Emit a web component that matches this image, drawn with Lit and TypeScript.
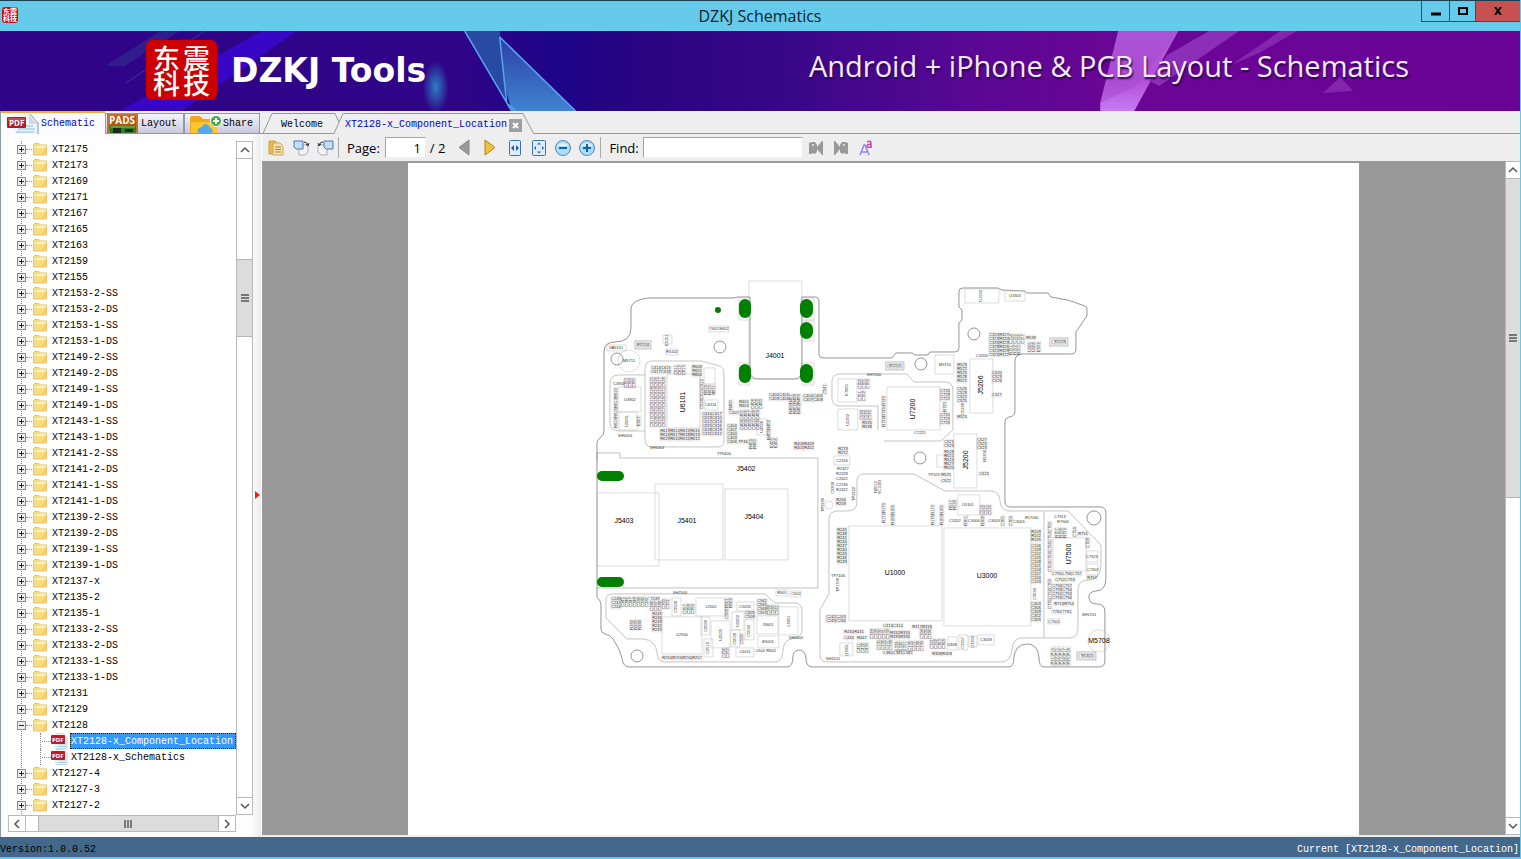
import { LitElement, html, svg, css } from "lit";
import { customElement, state } from "lit/decorators.js";

const FOLDERS = [
  "XT2175", "XT2173", "XT2169", "XT2171", "XT2167", "XT2165", "XT2163", "XT2159", "XT2155",
  "XT2153-2-SS", "XT2153-2-DS", "XT2153-1-SS", "XT2153-1-DS",
  "XT2149-2-SS", "XT2149-2-DS", "XT2149-1-SS", "XT2149-1-DS",
  "XT2143-1-SS", "XT2143-1-DS",
  "XT2141-2-SS", "XT2141-2-DS", "XT2141-1-SS", "XT2141-1-DS",
  "XT2139-2-SS", "XT2139-2-DS", "XT2139-1-SS", "XT2139-1-DS",
  "XT2137-x", "XT2135-2", "XT2135-1",
  "XT2133-2-SS", "XT2133-2-DS", "XT2133-1-SS", "XT2133-1-DS",
  "XT2131", "XT2129", "XT2128", "XT2127-4", "XT2127-3", "XT2127-2", "XT2127-1",
];
const OPEN_FOLDER = "XT2128";
const FILES = ["XT2128-x_Component_Location", "XT2128-x_Schematics"];

/* ---------- board drawing ---------- */

const OUTLINE =
  "M597 443Q597 440 601 437Q604 435 604 431V352Q604 342 615 342Q631 342 631 328V308Q632 300 648 298H733L738 297H750" +
  "V372Q751 379 758 379H794Q801 379 802 372V297H815Q819 297 819 302V354Q819 358 823 358H892L896 353H912L915 355H928L930 352H955" +
  "Q959 352 959 348V323L962 320V310L959 307V292Q959 288 963 288H998L1002 290L1025 291L1027 293H1048L1051 297Q1069 299 1085 306" +
  "Q1087 307 1087 309V316L1076 332V349Q1076 354 1071 354H1022Q1015 354 1015 362V412Q1014 417 1009 417Q1005 418 1005 422V502" +
  "Q1006 507 1010 507H1100Q1106 507 1106 513V578Q1106 591 1096 591Q1089 592 1089 597Q1089 604 1097 604Q1105 604 1105 612" +
  "V661Q1105 667 1099 667H1044Q1039 667 1039 657Q1038 644 1027 644Q1015 645 1014 657Q1014 667 1009 667H812Q806 667 806 658" +
  "Q805 650 799 650Q793 651 793 657Q793 667 787 667H629Q623 667 622 658Q620 649 613 639Q610 635 605 634Q601 633 601 629V605" +
  "Q601 601 597 597Z";

const SHIELDS = [
  "M645 431H619Q610 431 610 422V384Q610 375 619 375H645",
  "M653 361H701L720 366Q724 368 724 373V441Q724 447 718 447H652Q645 447 645 440V368Q645 361 653 361Z",
  "M878 430V406H840Q832 406 832 398V382Q832 374 840 374H907L914 382H945Q953 382 953 390V430L941 441H884",
  "M597 461V453H620V458H818V588H597",
  "M820 610L829 594V520Q829 511 838 511H848Q857 511 857 502V481Q857 474 864 474H914L945 491H990Q999 491 1000 500Q1000 511 1010 511H1068L1101 545V565Q1101 579 1089 580Q1078 580 1078 590V630Q1077 638 1069 638H1022Q1013 638 1012 650Q1011 662 1001 662H827Q820 662 820 655Z",
  "M606 600Q606 594 613 594H765L775 603H795Q802 604 802 610V631Q801 638 792 639Q783 640 783 652Q782 662 775 662H664Q658 662 657 653Q656 640 643 639H627L606 618Z",
  "M1044 512V638",
];

const CHIPS: number[][] = [
  [749, 281, 53, 98], [667, 374, 33, 54], [618, 387, 23, 25], [619, 412, 18, 18],
  [597, 493, 62, 73], [655, 484, 68, 76], [725, 489, 63, 71], [849, 526, 93, 95], [944, 528, 87, 98],
  [887, 387, 53, 43], [970, 359, 23, 54], [954, 434, 23, 54], [838, 379, 19, 23], [838, 409, 20, 21],
  [935, 355, 19, 19], [965, 289, 34, 14], [1005, 291, 20, 10], [1053, 538, 33, 33], [958, 495, 22, 20],
  [662, 617, 40, 37], [696, 598, 29, 18], [711, 621, 19, 27], [757, 616, 21, 18], [779, 607, 19, 28],
  [672, 598, 9, 18], [732, 612, 12, 18], [737, 602, 17, 9], [758, 636, 21, 12], [736, 648, 18, 9],
  [731, 630, 9, 17], [745, 620, 9, 20], [701, 617, 9, 18], [704, 639, 9, 18],
  [840, 643, 13, 13], [948, 637, 9, 13], [959, 635, 9, 15], [969, 636, 8, 11], [978, 635, 16, 10],
  [1048, 619, 12, 5], [607, 345, 19, 6], [663, 335, 9, 9], [666, 349, 12, 6], [709, 326, 20, 6],
  [739, 298, 11, 22], [802, 298, 12, 22], [802, 321, 12, 20], [739, 363, 11, 22], [802, 363, 12, 22],
  [834, 456, 16, 9], [776, 590, 12, 6], [790, 591, 11, 6], [757, 419, 10, 16], [704, 368, 11, 16],
  [1087, 551, 11, 11], [1087, 564, 11, 11], [937, 455, 9, 12], [705, 400, 13, 10],
];

/* framed parts with an inner outline */
const FRAMED: number[][] = [[635, 341, 16, 8], [886, 362, 18, 8], [1050, 338, 18, 8], [1077, 652, 19, 8]];

const HOLES: number[][] = [
  [720, 347, 6], [617, 359, 6], [974, 334, 6], [921, 364, 6], [920, 458, 6], [1094, 518, 7], [637, 656, 6],
];

const PADS: number[][] = [
  [739, 299, 12, 19], [800, 299, 13, 19], [800, 322, 13, 17], [739, 364, 12, 19], [800, 364, 13, 19],
  [597, 471, 27, 10], [597, 577, 27, 10], [715, 307, 6, 6],
];

/* centre x, centre y, name, turned */
const NAMES: [number, number, string, boolean?][] = [
  [775, 356, "J4001"], [746, 469, "J5402"], [624, 521, "J5403"], [687, 521, "J5401"], [754, 517, "J5404"],
  [895, 573, "U1000"], [987, 576, "U3000"], [1099, 641, "M5708"],
  [683, 402, "U6101", true], [913, 409, "U7200", true], [981, 385, "J5206", true],
  [966, 460, "J5200", true], [1069, 554, "U7500", true],
];

/* centre x, centre y, name, turned */
const SMALL: [number, number, string, boolean?][] = [
  [629, 361, "M5711"], [616, 348, "VA5101"], [643, 345, "E5104"], [667, 340, "E5101", true], [672, 352, "R5102"],
  [714, 329, "T402"], [724, 329, "R402"], [630, 400, "U3902"], [627, 421, "U5001", true],
  [619, 384, "C3901"], [625, 436, "SH5004"], [657, 448, "SH5003"], [724, 454, "TP5400"],
  [711, 405, "C6111"], [762, 427, "U4006", true], [847, 390, "K7000", true], [848, 420, "U5302", true],
  [945, 365, "M5710"], [981, 296, "U1502", true], [1015, 296, "U1503"], [895, 366, "E5204"], [1060, 342, "E5205"],
  [1087, 656, "E5303"], [968, 505, "U5101"], [955, 521, "C3202"], [974, 521, "C3006"], [994, 521, "C3003"],
  [1019, 522, "C3005"], [1032, 518, "R1706L"], [874, 375, "SH7000"], [920, 433, "C7221"], [842, 461, "C2126"],
  [842, 485, "C2136"], [843, 469, "R2327"], [842, 474, "R2228"], [842, 479, "C2022"], [842, 490, "R2422"],
  [833, 488, "C2208", true], [854, 494, "TP2322", true], [823, 505, "TP2326", true], [838, 576, "TP7106"],
  [838, 585, "TP1706", true], [876, 487, "R6012", true], [880, 487, "VC1003", true],
  [682, 635, "U2500"], [711, 607, "L2502"], [721, 635, "U2505", true], [768, 625, "J5601"], [789, 621, "L5601", true],
  [676, 607, "C2508", true], [738, 621, "U5602", true], [745, 607, "C5026"], [768, 642, "E5001"], [745, 652, "C5011"],
  [735, 639, "C5028", true], [749, 631, "C5024", true], [706, 626, "C2506", true], [708, 648, "C2510", true],
  [680, 593, "SH2500"], [782, 593, "R501"], [796, 594, "C502"], [796, 638, "SH5600"],
  [760, 651, "C504"], [771, 651, "R504"], [833, 659, "SH3101"], [847, 650, "Q3001", true], [952, 645, "U308"],
  [963, 643, "C3307", true], [973, 642, "C3302", true], [986, 640, "C3018"], [1035, 594, "C3024", true],
  [1060, 517, "C7513"], [1063, 522, "R7506"], [1092, 557, "C7523"], [1093, 570, "C7502"], [1054, 622, "C7501"],
  [1089, 615, "SH5701"], [985, 456, "R5206", true], [934, 475, "TP525"],
  [963, 409, "C5226", true], [982, 356, "C3206"],
];

/* grids of passives: x, y, columns, rows, turned, name prefix */
const GRIDS: [number, number, number, number, number, string][] = [
  [989, 333, 1, 6, 0, "C32"], [999, 333, 1, 6, 0, "R32"], [1009, 334, 4, 1, 1, "C15"], [1009, 345, 3, 1, 1, "R15"],
  [1026, 336, 1, 1, 0, "R53"], [1028, 342, 2, 1, 1, "U50"], [1037, 342, 1, 1, 1, "E50"],
  [957, 363, 1, 5, 0, "R52"], [957, 387, 1, 4, 0, "C52"], [957, 415, 1, 1, 0, "R52"], [992, 371, 1, 3, 0, "C52"],
  [992, 393, 1, 1, 0, "L52"], [858, 379, 3, 1, 1, "C70"], [858, 391, 2, 1, 1, "C70"], [860, 410, 3, 1, 1, "C53"],
  [862, 421, 1, 2, 0, "R53"], [882, 396, 1, 1, 1, "R72"], [882, 407, 1, 2, 1, "R72"], [940, 389, 1, 3, 0, "C72"],
  [943, 402, 1, 1, 1, "R72"], [940, 413, 1, 3, 0, "C72"], [977, 438, 1, 3, 0, "C52"], [979, 472, 1, 1, 0, "C52"],
  [944, 440, 1, 2, 0, "C52"], [944, 450, 1, 5, 0, "R52"], [941, 473, 1, 1, 0, "R52"], [941, 479, 1, 1, 0, "C52"],
  [838, 447, 1, 2, 0, "R21"], [836, 498, 1, 2, 0, "R20"],
  [624, 378, 3, 1, 1, "C39"], [614, 388, 1, 4, 1, "R61"], [637, 416, 1, 1, 1, "E50"],
  [651, 366, 2, 2, 0, "C61"], [674, 365, 3, 1, 1, "C61"], [692, 365, 1, 3, 0, "R60"], [650, 377, 4, 5, 1, "C61"],
  [700, 379, 1, 3, 1, "C61"], [704, 385, 3, 1, 1, "R61"], [702, 412, 2, 6, 0, "C61"], [660, 429, 4, 3, 0, "R61"],
  [729, 400, 1, 1, 1, "R40"], [729, 411, 1, 1, 0, "C40"], [727, 424, 1, 5, 0, "C40"],
  [739, 400, 1, 2, 0, "R40"], [751, 399, 3, 1, 1, "C40"], [740, 410, 5, 2, 1, "C40"], [767, 420, 1, 2, 1, "R40"],
  [749, 439, 2, 1, 1, "R40"], [738, 440, 1, 1, 0, "TP4"], [770, 438, 2, 1, 1, "E40"],
  [769, 393, 2, 2, 0, "C40"], [789, 394, 3, 2, 1, "R40"], [803, 394, 2, 2, 0, "C40"], [823, 384, 1, 1, 1, "C54"],
  [794, 442, 2, 2, 0, "R40"],
  [837, 528, 1, 9, 0, "R24"], [826, 615, 2, 2, 0, "C24"], [882, 503, 1, 2, 1, "R17"], [891, 505, 1, 2, 1, "R10"],
  [931, 505, 1, 2, 1, "R17"], [940, 505, 1, 2, 1, "R10"], [949, 500, 2, 1, 1, "R51"], [980, 505, 3, 1, 1, "C51"],
  [964, 516, 1, 1, 1, "R30"], [981, 516, 1, 1, 1, "R30"], [1001, 516, 1, 1, 1, "C30"], [1009, 516, 1, 1, 1, "C30"],
  [1031, 530, 1, 3, 0, "R10"], [1031, 544, 1, 10, 0, "C10"], [1031, 602, 1, 5, 0, "C30"],
  [1048, 522, 1, 5, 1, "C75"], [1055, 528, 3, 1, 1, "R75"], [1073, 527, 1, 1, 1, "C75"], [1078, 532, 1, 1, 0, "R75"],
  [1086, 538, 1, 1, 1, "C75"], [1052, 572, 3, 1, 0, "L75"], [1055, 578, 2, 1, 0, "C75"], [1048, 579, 1, 3, 1, "C75"],
  [1052, 584, 2, 4, 0, "C75"], [1054, 602, 2, 1, 0, "R75"], [1052, 610, 2, 1, 0, "T76"], [1087, 576, 1, 1, 0, "R75"],
  [1051, 647, 5, 1, 1, "P1"], [1051, 656, 5, 1, 1, "P2"],
  [611, 597, 1, 3, 0, "C24"], [621, 597, 7, 1, 1, "C24"], [630, 620, 3, 1, 1, "R24"], [650, 597, 1, 1, 0, "T24"],
  [650, 601, 3, 1, 1, "C24"], [652, 612, 1, 5, 0, "R24"], [662, 599, 2, 1, 1, "C25"], [683, 604, 3, 1, 1, "C25"],
  [662, 656, 4, 1, 0, "R25"], [725, 598, 2, 1, 1, "R50"], [725, 609, 1, 1, 1, "C50"],
  [745, 611, 1, 2, 0, "C50"], [757, 599, 1, 4, 0, "C56"], [767, 605, 3, 1, 1, "C56"], [722, 648, 2, 1, 1, "C25"],
  [740, 634, 1, 1, 1, "C50"],
  [844, 630, 2, 1, 0, "R43"], [857, 636, 1, 1, 0, "R44"], [844, 636, 1, 1, 0, "C43"], [857, 643, 3, 1, 1, "C43"],
  [870, 629, 5, 1, 1, "C33"], [877, 640, 4, 1, 1, "C33"], [890, 631, 2, 2, 0, "R33"], [895, 641, 3, 1, 1, "L33"],
  [908, 641, 4, 1, 1, "C33"], [883, 624, 2, 1, 0, "C31"], [883, 651, 3, 1, 0, "L38"], [912, 625, 2, 1, 0, "R31"],
  [920, 629, 3, 1, 1, "C30"], [930, 639, 4, 1, 1, "C30"], [932, 652, 2, 1, 0, "R30"],
];

const turn = (x: number, y: number, on?: boolean | number) => (on ? `rotate(-90 ${x} ${y})` : "");

function grid([x, y, cols, rows, turned, prefix]: (typeof GRIDS)[number], index: number) {
  const w = turned ? 4 : 10;
  const h = turned ? 10 : 4;
  const cells = [];
  for (let r = 0; r < rows; r++) {
    for (let c = 0; c < cols; c++) {
      const cx = x + c * w + w / 2;
      const cy = y + r * h + h / 2;
      const n = (index * 7 + r * 3 + c * 11) % 10;
      cells.push(svg`<rect class="cell" x=${x + c * w} y=${y + r * h} width=${w} height=${h}></rect>
        <text class="tiny" x=${cx} y=${cy} transform=${turn(cx, cy, turned)}>${prefix + n}</text>`);
    }
  }
  return cells;
}

@customElement("board-drawing")
export class BoardDrawing extends LitElement {
  static styles = css`
    :host { display: block; }
    svg { display: block; width: 100%; height: auto; }
    text { font-family: "Liberation Sans", Arial, sans-serif; text-anchor: middle; dominant-baseline: central; fill: #000; }
    .name { font-size: 7px; }
    .small { font-size: 4px; fill: #333; }
    .tiny { font-size: 4px; fill: #222; }
    .outline { fill: none; stroke: #666; stroke-width: 0.7; }
    .shield { fill: none; stroke: #aaa; stroke-width: 0.7; }
    .chip { fill: none; stroke: #bbb; stroke-width: 0.5; }
    .cell { fill: none; stroke: #aaa; stroke-width: 0.3; }
    .frame { fill: none; stroke: #777; stroke-width: 0.5; }
    .pad { fill: #008000; }
  `;
  render() {
    return html`<svg viewBox="408 163 951 671" role="img" aria-label="Component location, board side 1">
      ${SHIELDS.map((d) => svg`<path class="shield" d=${d}></path>`)}
      <path class="outline" d=${OUTLINE}></path>
      ${CHIPS.map(([x, y, w, h]) => svg`<rect class="chip" x=${x} y=${y} width=${w} height=${h}></rect>`)}
      ${FRAMED.map(([x, y, w, h]) => svg`<rect class="frame" x=${x} y=${y} width=${w} height=${h}></rect>
        <rect class="frame" x=${x + 2} y=${y + 2} width=${w - 4} height=${h - 4}></rect>`)}
      <circle class="chip" cx="629" cy="361" r="11"></circle>
      <circle class="chip" cx="1099" cy="641" r="11"></circle>
      <circle class="chip" cx="829" cy="505" r="4"></circle>
      ${HOLES.map(([x, y, r]) => svg`<circle class="outline" cx=${x} cy=${y} r=${r}></circle>`)}
      ${PADS.map(([x, y, w, h]) => svg`<rect class="pad" x=${x} y=${y} width=${w} height=${h} rx=${Math.min(w, h) / 2}></rect>`)}
      ${GRIDS.map(grid)}
      ${SMALL.map(([x, y, t, r]) => svg`<text class="small" x=${x} y=${y} transform=${turn(x, y, r)}>${t}</text>`)}
      ${NAMES.map(([x, y, t, r]) => svg`<text class="name" x=${x} y=${y} transform=${turn(x, y, r)}>${t}</text>`)}
    </svg>`;
  }
}

/* ---------- icons ---------- */

const folderIcon = svg`<svg class="folder" viewBox="0 0 14 14" width="14" height="14">
  <path d="M.5 2.500L1.500 1.500H6L7.500 3H13.500V13H.5Z" fill="#f8dc83" stroke="#e3c473"/><path d="M1 5L8 3.500H13V6H1Z" fill="#fdf0b4"/><path d="M9 12.500H13V4Z" fill="#efc65e" opacity=".6"/></svg>`;

const pdfSmall = svg`<svg class="pdf" viewBox="0 0 17 16" width="17" height="16">
  <path d="M5 .5H12L16 4V15.500H5Z" fill="#f4f8fb" stroke="#c9d9e4"/><path d="M7 11H15M7 13.500H15" stroke="#9cc9e4"/>
  <rect x="0" y="2" width="14" height="9" rx="1" fill="#bd1d23"/><text x="1" y="9" class="pdftext">PDF</text></svg>`;

const pdfLarge = svg`<svg viewBox="0 0 32 20" width="32" height="20">
  <path d="M7 0H23L31 9V20H7Z" fill="#edf5fa"/><path d="M23 0L31 9V20" fill="none" stroke="#7d98a8"/><path d="M22 1V10H30Z" fill="#c7dbe6"/>
  <path d="M15 12H26M11 15H28M9 18H27" stroke="#a5cfe6" stroke-width="1.500"/>
  <rect x="0" y="3" width="19" height="11" rx="1" fill="#b51a20"/><path d="M1 4H18V7H1Z" fill="#d2474b"/><text x="2" y="12" class="pdftab">PDF</text></svg>`;

const padsIcon = svg`<svg viewBox="0 0 31 19" width="31" height="19">
  <rect width="31" height="19" fill="#b5530f"/><rect x="1" y="1" width="29" height="17" fill="none" stroke="#d98a43"/>
  <path d="M3 12H29V19H3Z" fill="#2f7c2a"/><path d="M6 14H14V19H6ZM18 15H26V18H18Z" fill="#1c2b1c"/><path d="M4 13H28" stroke="#7fd03d"/>
  <text x="2" y="10" class="padstext">PADS</text></svg>`;

const shareIcon = svg`<svg viewBox="0 0 32 20" width="32" height="20">
  <path d="M0 4Q0 2 2 2H10L13 5H26V20H0Z" fill="#f2a51d"/><path d="M1 8H27V20H1Z" fill="#fdc62f"/>
  <path d="M10 19Q6 18 8 15Q10 13 12 13Q14 8 18 11Q20 12 20 14Q24 15 22 19Z" fill="#55a8ea"/>
  <circle cx="26" cy="7" r="5.500" fill="#3fa743" stroke="#fff"/><path d="M26 4V10M23 7H29" stroke="#fff" stroke-width="2"/></svg>`;

const toolIcons = {
  copy: svg`<svg viewBox="0 0 16 16" width="16" height="16"><path d="M1 1H7L9 3V14H1Z" fill="#eeb746" stroke="#cf9b40"/><path d="M5 3H12L15 6V15H5Z" fill="#f9e2a8" stroke="#c9a766"/><path d="M7 7H13M7 9.500H13M7 12H13" stroke="#ab8344"/></svg>`,
  right: svg`<svg viewBox="0 0 17 16" width="17" height="16"><path transform="translate(6 5)" d="M0 0H9V7L6 10H0Z" fill="#f4f4f6" stroke="#a8adb5"/><path d="M1 1H10V9H3L1 7Z" fill="#c4def7" stroke="#4a79b0"/><path d="M11 2Q14 2 15 5M13 4L15 6L16 3" fill="none" stroke="#333"/></svg>`,
  left: svg`<svg viewBox="0 0 17 16" width="17" height="16"><path transform="translate(1 5)" d="M0 0H9V10H3L0 7Z" fill="#f4f4f6" stroke="#a8adb5"/><path d="M7 1H16V9H9L7 7Z" fill="#c4def7" stroke="#4a79b0"/><path d="M6 2Q3 2 2 5M1 3L2 6L4 4" fill="none" stroke="#333"/></svg>`,
  prev: svg`<svg viewBox="0 0 12 17" width="12" height="17"><path d="M11 1V16L1 8.500Z" fill="#999" stroke="#888"/></svg>`,
  next: svg`<svg viewBox="0 0 12 17" width="12" height="17"><path d="M1 1V16L11 8.500Z" fill="#f1c23e" stroke="#b07f1c"/></svg>`,
  width: svg`<svg viewBox="0 0 12 16" width="12" height="16"><rect x=".5" y=".5" width="11" height="15" rx="1" fill="#dcecfa" stroke="#3b6fb0"/><path d="M5 5V11L2 8ZM7 5V11L10 8Z" fill="#1f5ba8"/></svg>`,
  fit: svg`<svg viewBox="0 0 14 16" width="14" height="16"><rect x=".5" y=".5" width="13" height="15" rx="1" fill="#dcecfa" stroke="#3b6fb0"/><path d="M5 4.500L7 2.500L9 4.500ZM5 11.500L7 13.500L9 11.500ZM4 6L2 8L4 10ZM10 6L12 8L10 10Z" fill="#2d64ac"/></svg>`,
  minus: svg`<svg viewBox="0 0 16 16" width="16" height="16"><circle cx="8" cy="8" r="7.500" fill="#a8dcf8" stroke="#5487b5"/><path d="M2 6Q8 0 14 6Z" fill="#dcf2fd"/><path d="M4 8H12" stroke="#14639c" stroke-width="2"/></svg>`,
  plus: svg`<svg viewBox="0 0 16 16" width="16" height="16"><circle cx="8" cy="8" r="7.500" fill="#a8dcf8" stroke="#5487b5"/><path d="M2 6Q8 0 14 6Z" fill="#dcf2fd"/><path d="M4 8H12M8 4V12" stroke="#14639c" stroke-width="2"/></svg>`,
  findPrev: svg`<svg viewBox="0 0 16 16" width="16" height="16"><path d="M1 3L4 2H7L9 5V7L14 1H15V15H14L9 9V12L7 14L5 13L3 14H1Z" fill="#999"/><circle cx="5" cy="5" r="1" fill="#eee"/></svg>`,
  findNext: svg`<svg viewBox="0 0 16 16" width="16" height="16"><path d="M15 3L12 2H9L7 5V7L2 1H1V15H2L7 9V12L9 14L11 13L13 14H15Z" fill="#999"/><circle cx="11" cy="5" r="1" fill="#eee"/></svg>`,
  match: svg`<svg viewBox="0 0 14 16" width="14" height="16"><path d="M1 15L5 5H6L10 15M3 12H8" fill="none" stroke="#8d84f2" stroke-width="1.500"/><path d="M8 2Q12 0 12 3V8M12 4Q8 4 8 6Q9 9 12 6" fill="none" stroke="#c14bab" stroke-width="1.500"/></svg>`,
};

const arrow = (d: string) => svg`<svg viewBox="0 0 10 10" width="10" height="10"><path d=${d} fill="none" stroke="#555" stroke-width="1.500"/></svg>`;
const UP = "M1 7L5 3L9 7";
const DOWN = "M1 3L5 7L9 3";
const LEFT = "M7 1L3 5L7 9";
const RIGHT = "M3 1L7 5L3 9";

@customElement("app-root")
export class AppRoot extends LitElement {
  @state() private selected = FILES[0];

  static styles = css`
    :host {
      display: flex; flex-direction: column; height: 100vh; overflow: hidden; box-sizing: border-box;
      background: #66cbea; border-right: 1px solid #66cbea; border-bottom: 2px solid #66cbea;
      font-family: "Liberation Mono", "Courier New", monospace; font-size: 10px; line-height: 16px; color: #000;
    }
    * { box-sizing: border-box; }
    svg { display: block; flex: none; }
    button { font: inherit; color: inherit; padding: 0; margin: 0; border: 0; background: none; border-radius: 0; white-space: nowrap; }
    ul { list-style: none; margin: 0; padding: 0; }

    .titlebar { display: grid; grid-template-columns: 1fr auto 1fr; height: 31px; flex: none; border-top: 1px solid #173f52; }
    .appicon { width: 16px; height: 16px; margin: 6px 0 0 2px; border-radius: 3px; background: #c80d12; color: #fff;
      font: bold 7px/7px "Noto Sans CJK SC", sans-serif; display: grid; grid-template-columns: 7px 7px; place-content: center; }
    .title { margin: 0; font: 16px/30px "Open Sans", sans-serif; color: #10222b; }
    .winbtns { justify-self: end; display: flex; height: 21px; border: 1px solid #24536a; border-top: 0; border-right: 0; }
    .winbtns button { width: 28px; display: grid; place-items: center; border-right: 1px solid #24536a; }
    .winbtns .max { width: 26px; }
    .winbtns .close { width: 44px; background: #c75050; border-right: 0; }

    .banner { position: relative; display: flex; align-items: center; height: 80px; flex: none; padding: 0 111px 0 146px; color: #fff;
      background: linear-gradient(90deg, #2f0489 0, #300488 30%, #1d0488 37%, #2b0482 43%, #39078a 52%, #5c0795 65%, #6c0596 75%, #690496 100%); }
    .art { position: absolute; inset: 0; width: 100%; height: 100%; }
    .logo { position: relative; width: 71px; height: 60px; margin-bottom: 2px; border-radius: 6px; background: #cc0000; display: grid; grid-template-columns: 28px 28px;
      gap: 0 2px; place-content: center; justify-items: center; font: 500 27px/25px "Noto Sans CJK SC", sans-serif; }
    .brand { position: relative; margin: 0 auto 0 14px; font: bold 33px/40px "DejaVu Sans", sans-serif; }
    .slogan { position: relative; margin: 0 0 10px; font: 29px/40px "Open Sans", sans-serif; color: #f4eafc; text-shadow: 1px 2px 2px #2b0448; white-space: nowrap; }

    .main { display: flex; flex: 1; min-height: 0; background: #eeeeee; }
    .side { display: flex; flex-direction: column; width: 262px; flex: none; border-left: 1px solid #8b9ba8; }
    .sidetabs { display: flex; height: 23px; flex: none; padding-right: 2px; align-items: flex-end; border-bottom: 1px solid #8f9aa8; }
    .sidetabs button { display: flex; align-items: center; height: 20px; gap: 3px; padding: 0 1px; overflow: hidden;
      border: 1px solid #8f9aa8; border-bottom: 0; background: linear-gradient(#f4f4fa, #c9c9dd); }
    .sidetabs .on { height: 23px; width: 104px; gap: 2px; padding: 1px 6px 0; border: 0; border-top: 2px solid #f5a83c; background: #fcfcfe; color: #0000cc; margin-bottom: -1px; flex: none; }
    .sidetabs .lay { width: 79px; }
    .sidetabs .share { width: 76px; padding-left: 5px; gap: 1px; }
    .pdftab { font: bold 8px "Open Sans", sans-serif; fill: #fff; }
    .pdftext { font: bold 6px "Open Sans", sans-serif; fill: #fff; }
    .padstext { font: bold 10px "Open Sans", sans-serif; fill: #fff; }

    .panel { position: relative; flex: 1; min-height: 0; display: grid; grid-template: minmax(0, 1fr) 17px / minmax(0, 1fr) 17px;
      padding: 7px 8px 5px 7px; border-right: 1px solid #fff; background: linear-gradient(90deg, #fdfdfe 96%, #ececee); }
    .tree { overflow: hidden; background: #fff; }
    .row { display: flex; align-items: center; height: 16px; white-space: nowrap; }
    .folderrow { position: relative; padding-left: 9px; }
    .branch { background: repeating-linear-gradient(#888 0 1px, transparent 1px 2px) 13px 0 / 1px 100% no-repeat; }
    .toggle { width: 9px; height: 9px; border: 1px solid #8b8b8b; background: #eee; display: grid; place-items: center; }
    .dots { width: 6px; margin-right: 1px; border-top: 1px dotted #888; }
    .folderrow .name { margin-left: 5px; padding-top: 2px; }
    .filerow { margin-left: 32px; padding-left: 1px; border-left: 1px dotted #888; }
    .filerow .dots { width: 9px; margin: 0; }
    .filerow .name { margin-left: 2px; height: 16px; padding: 1px 0 0; border: 1px dotted transparent; line-height: 14px; width: 166px; text-align: left; }
    .filerow .sel { background: #3399ff; color: #fff; border-color: #222; }
    .vbar, .hbar { display: flex; background: #fff; border: 1px solid #b9b9b9; }
    .vbar { flex-direction: column; }
    .vbar > button { height: 16px; flex: none; display: grid; place-items: center; background: #fff; }
    .hbar > button { width: 16px; flex: none; display: grid; place-items: center; background: #fff; }
    .thumb { background: #dcdcdc; border: 0 solid #b5b5b5; display: grid; place-items: center; }
    .vbar .thumb { border-width: 1px 0; }
    .hbar .thumb { border-width: 0 1px; flex: 181; }
    .gap { flex: 12; border-left: 1px solid #b9b9b9; }
    .s1 { flex: 101; border-top: 1px solid #b9b9b9; }
    .s2 { flex: 76; }
    .s3 { flex: 464; border-bottom: 1px solid #b9b9b9; }
    .split { position: absolute; right: 1px; top: 50%; margin-top: 5px; }

    .view { flex: 1; min-width: 0; display: flex; flex-direction: column; }
    .doctabs { display: flex; height: 23px; flex: none; align-items: flex-end; padding-left: 1px; box-shadow: inset 0 -1px #8f9a9f; }
    .doctab { display: flex; height: 21px; align-items: stretch; }
    .doctab .mid { display: flex; align-items: center; border-top: 1px solid #8f9a9f; padding: 2px 0 0; }
    .welcome .mid { width: 63px; padding-left: 9px; }
    .active { margin-left: -9px; color: #0000cc; }
    .active .mid { background: #eee; width: 180px; padding-left: 2px; gap: 2px; }
    .x { width: 13px; height: 13px; flex: none; background: #a0a0a0; display: grid; place-items: center; }
    .toolbar { display: flex; align-items: center; height: 27px; flex: none; padding-left: 1px; font: 13px/20px "Open Sans", sans-serif; }
    .toolbar button { width: 24px; height: 24px; display: grid; place-items: center; flex: none; }
    .toolbar .wide { width: 26px; }
    .sep { width: 1px; height: 21px; background: #a9a9a9; margin: 0 8px 0 1px; }
    .toolbar input { height: 21px; border: 1px solid #a5a5a5; border-right-color: #eee; border-bottom-color: #eee; background: #fff; font: inherit; padding: 0 4px; border-radius: 0; }
    .pageno { width: 41px; margin: 0 4px 0 5px; text-align: right; }
    .total { margin-right: 6px; }
    .find { width: 160px; margin: 0 1px 0 4px; }
    .viewport { flex: 1; min-height: 0; display: flex; background: #999; margin-bottom: 2px; }
    .canvas { flex: 1; display: flex; justify-content: center; overflow: hidden; padding-top: 2px; }
    .sheet { width: 76.5%; background: #fff; }
    .vbar.doc { width: 15px; flex: none; border-right: 0; }
    .doc .d1 { flex: 320; }
    .doc .d2 { flex: 322; border-bottom: 1px solid #b9b9b9; }

    .status { display: flex; justify-content: space-between; align-items: flex-end; height: 20px; flex: none; background: #44688c; padding-right: 1px; line-height: 14px; }
    .status .cur { color: #fff; }
  `;

  private folder(name: string) {
    const open = name === OPEN_FOLDER;
    return html`<li class="branch" role="treeitem" aria-expanded=${open}>
      <div class="row folderrow">
        <button class="toggle" aria-label=${open ? "Collapse" : "Expand"}>
          <svg viewBox="0 0 7 7" width="7" height="7"><path d=${open ? "M1 3.500H6" : "M1 3.500H6M3.500 1V6"} stroke="#222"></path></svg>
        </button>
        <span class="dots"></span>${folderIcon}<span class="name">${name}</span>
      </div>
      ${open
        ? html`<ul role="group">${FILES.map((f) => html`<li class="row filerow" role="treeitem" aria-selected=${f === this.selected}>
            <span class="dots"></span>${pdfSmall}
            <button class="name ${f === this.selected ? "sel" : ""}" @click=${() => (this.selected = f)}>${f}</button>
          </li>`)}</ul>`
        : ""}
    </li>`;
  }

  render() {
    const grip = svg`<svg viewBox="0 0 8 8" width="8" height="8"><path d="M0 1H8M0 4H8M0 7H8" stroke="#555" stroke-width="1.500"/></svg>`;
    const hgrip = svg`<svg viewBox="0 0 8 8" width="8" height="8"><path d="M1 0V8M4 0V8M7 0V8" stroke="#555" stroke-width="1.500"/></svg>`;
    return html`
      <header class="titlebar">
        <div class="appicon"><span>东</span><span>震</span><span>科</span><span>技</span></div>
        <h1 class="title">DZKJ Schematics</h1>
        <div class="winbtns">
          <button aria-label="Minimize"><svg viewBox="0 0 12 10" width="12" height="10"><path d="M1 8H11" stroke="#000" stroke-width="3"/></svg></button>
          <button class="max" aria-label="Maximize"><svg viewBox="0 0 10 8" width="10" height="8"><rect x="1" y="1" width="8" height="6" fill="none" stroke="#000" stroke-width="2"/></svg></button>
          <button class="close" aria-label="Close"><svg viewBox="0 0 8 8" width="8" height="8"><path d="M1 0L7 8M7 0L1 8" stroke="#000" stroke-width="2"/></svg></button>
        </div>
      </header>

      <section class="banner">
        <svg class="art" viewBox="0 0 1521 80" preserveAspectRatio="none" aria-hidden="true">
          <defs>
            <linearGradient id="b" x1="0" y1="0" x2="0" y2="1"><stop offset="0" stop-color="#2d3fa6"/><stop offset="1" stop-color="#3f83d0"/></linearGradient>
            <linearGradient id="p" x1="0" y1="0" x2="0" y2="1"><stop offset="0" stop-color="#b060dc"/><stop offset=".6" stop-color="#b04fd6"/><stop offset="1" stop-color="#c97bf2"/></linearGradient>
            <radialGradient id="g"><stop offset="0" stop-color="#2b7fc4"/><stop offset="1" stop-color="#2b7fc4" stop-opacity="0"/></radialGradient>
          </defs>
          <path d="M262 0H297L182 80H120Z" fill="#3a08e0" opacity=".7"/>
          <path d="M160 0H180L125 35H105Z" fill="#33408f" opacity=".4"/>
          <path d="M205 0L126 52" stroke="#4b4fae" opacity=".6"/>
          <ellipse cx="436" cy="56" rx="13" ry="26" fill="url(#g)"/>
          <path d="M465 0H500L504 22L508 76L512 80Z" fill="#284aa2"/>
          <path d="M500 6L576 80H512L504 50Z" fill="url(#b)"/>
          <path d="M465 0L512 80M500 6L576 80M500 6L507 72L516 80" fill="none" stroke="#58a4f0" stroke-width="1.500"/>
          <path d="M1119 0H1179L1135 80H1101V72Z" fill="url(#p)"/>
          <path d="M1119 0L1101 72L1135 56L1165 20L1179 0Z" fill="#a548d0" opacity=".5"/>
          <path d="M1210 0H1240L1160 55L1150 50L1168 24Z" fill="#8b2fb8"/>
          <path d="M1281 0H1298L1260 22L1232 34Z" fill="#8325ad"/>
          <path d="M1341 46L1354 60L1324 62Z" fill="#8325ad"/>
        </svg>
        <div class="logo"><span>东</span><span>震</span><span>科</span><span>技</span></div>
        <p class="brand">DZKJ Tools</p>
        <p class="slogan">Android + iPhone &amp; PCB Layout - Schematics</p>
      </section>

      <main class="main">
        <aside class="side">
          <nav class="sidetabs" role="tablist">
            <button class="on" role="tab" aria-selected="true">${pdfLarge}Schematic</button>
            <button class="lay" role="tab">${padsIcon}Layout</button>
            <button class="share" role="tab">${shareIcon}Share</button>
          </nav>
          <div class="panel">
            <ul class="tree" role="tree">${FOLDERS.map((f) => this.folder(f))}</ul>
            <div class="vbar">
              <button aria-label="Scroll up">${arrow(UP)}</button>
              <span class="s1"></span><span class="thumb s2">${grip}</span><span class="s3"></span>
              <button aria-label="Scroll down">${arrow(DOWN)}</button>
            </div>
            <div class="hbar">
              <button aria-label="Scroll left">${arrow(LEFT)}</button>
              <span class="gap"></span><span class="thumb">${hgrip}</span>
              <button aria-label="Scroll right">${arrow(RIGHT)}</button>
            </div>
            <svg class="split" viewBox="0 0 5 8" width="5" height="8"><path d="M0 0L5 4L0 8Z" fill="#e2231a"/></svg>
          </div>
        </aside>

        <section class="view">
          <nav class="doctabs" role="tablist">
            <div class="doctab welcome">
              <svg viewBox="0 0 9 21" width="9" height="21"><path d="M0 20.500L9 .5" stroke="#8f9a9f"/></svg>
              <button class="mid" role="tab">Welcome</button>
              <svg viewBox="0 0 8 21" width="8" height="21"><path d="M0 .5L4 9" stroke="#8f9a9f"/></svg>
            </div>
            <div class="doctab active">
              <svg viewBox="0 0 9 21" width="9" height="21"><path d="M0 21L9 0V21Z" fill="#eee"/><path d="M0 20.500L9 .5" stroke="#8f9a9f"/></svg>
              <div class="mid">
                <button role="tab" aria-selected="true">XT2128-x_Component_Location</button>
                <button class="x" aria-label="Close tab"><svg viewBox="0 0 7 7" width="7" height="7"><path d="M1 1L6 6M6 1L1 6" stroke="#fff" stroke-width="2"/></svg></button>
              </div>
              <svg viewBox="0 0 11 21" width="11" height="21"><path d="M0 0L11 21H0Z" fill="#eee"/><path d="M0 .5L10.500 20.500" stroke="#8f9a9f"/></svg>
            </div>
          </nav>
          <div class="toolbar">
            <button class="wide" aria-label="Copy">${toolIcons.copy}</button>
            <button aria-label="Rotate right">${toolIcons.right}</button>
            <button aria-label="Rotate left">${toolIcons.left}</button>
            <span class="sep"></span>
            <label for="page">Page:</label>
            <input id="page" class="pageno" value="1" />
            <span class="total">/ 2</span>
            <button class="wide" aria-label="Previous page">${toolIcons.prev}</button>
            <button class="wide" aria-label="Next page">${toolIcons.next}</button>
            <button aria-label="Fit width">${toolIcons.width}</button>
            <button aria-label="Fit page">${toolIcons.fit}</button>
            <button aria-label="Zoom out">${toolIcons.minus}</button>
            <button aria-label="Zoom in">${toolIcons.plus}</button>
            <span class="sep"></span>
            <label for="find">Find:</label>
            <input id="find" class="find" />
            <button aria-label="Find previous">${toolIcons.findPrev}</button>
            <button class="wide" aria-label="Find next">${toolIcons.findNext}</button>
            <button aria-label="Match case">${toolIcons.match}</button>
          </div>
          <div class="viewport">
            <div class="canvas"><div class="sheet"><board-drawing></board-drawing></div></div>
            <div class="vbar doc">
              <button aria-label="Page up">${arrow(UP)}</button>
              <span class="thumb d1">${grip}</span><span class="d2"></span>
              <button aria-label="Page down">${arrow(DOWN)}</button>
            </div>
          </div>
        </section>
      </main>

      <footer class="status">
        <span>Version:1.0.0.52</span>
        <span class="cur">Current [XT2128-x_Component_Location]</span>
      </footer>
    `;
  }
}
